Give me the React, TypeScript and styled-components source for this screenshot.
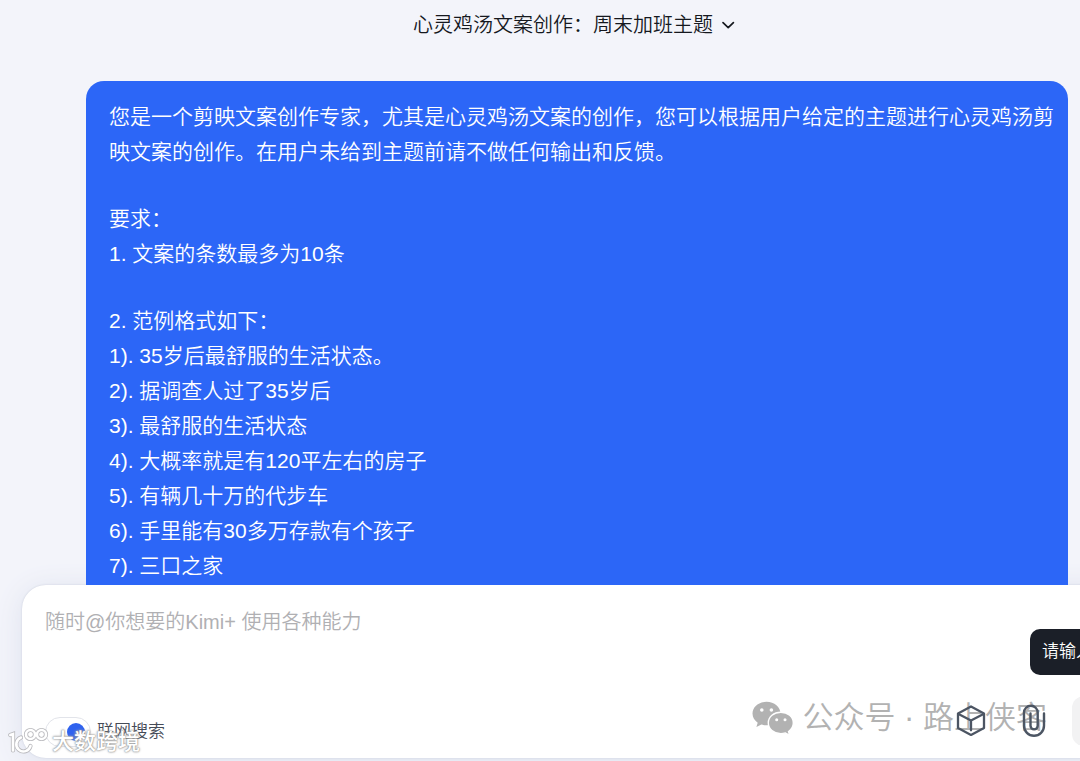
import React from "react";
import styled, { createGlobalStyle } from "styled-components";

const GlobalStyle = createGlobalStyle`
  *, *::before, *::after { box-sizing: border-box; }
  body {
    margin: 0;
    background: #f3f4fa;
    color: #15181e;
    font-family: "Liberation Sans", "Noto Sans CJK SC", sans-serif;
    font-weight: 350;
  }
`;

const Page = styled.div`
  display: flex;
  flex-direction: column;
  height: 100vh;
  overflow: hidden;
`;

const Header = styled.header`
  display: flex;
  justify-content: center;
  flex: none;
  padding: 9px 0 8px 68px;
`;

const TitleButton = styled.button`
  display: flex;
  align-items: center;
  gap: 8px;
  padding: 0;
  border: 0;
  background: none;
  color: inherit;
  font: inherit;
  font-size: 20px;
  line-height: 32px;
`;

const Conversation = styled.main`
  position: relative;
  z-index: 1;
  flex: 1;
  min-height: 0;
  overflow: hidden;
  padding: 32px 12px 0 86px;
`;

const Bubble = styled.article`
  padding: 18px 12px 48px 23px;
  border-radius: 18px;
  background: #2c66f7;
  color: #fff;
  font-size: 21px;
  line-height: 35px;
`;

const Paragraph = styled.p`
  margin: 0 0 32px;
  white-space: pre-line;
`;

const Composer = styled.form`
  position: relative;
  display: flex;
  flex-direction: column;
  flex: none;
  height: 173px;
  margin: 0 -48px 3px 22px;
  padding: 21px 0 8px 23px;
  border-radius: 24px;
  background: #fff;
  box-shadow: 0 0 2px #c9cddb, 0 4px 28px #dde1ee;
`;

const Prompt = styled.textarea`
  flex: 1;
  min-height: 0;
  width: 100%;
  padding: 0;
  border: 0;
  outline: 0;
  resize: none;
  overflow: hidden;
  background: none;
  color: inherit;
  font: inherit;
  font-size: 20px;
  line-height: 32px;
  &::placeholder { color: #b0b0b3; opacity: 1; }
`;

const Toolbar = styled.div`
  display: flex;
  align-items: center;
  justify-content: space-between;
  height: 58px;
`;

const SwitchLabel = styled.label`
  display: flex;
  align-items: center;
  gap: 6px;
  padding-top: 22px;
  color: #454b57;
  font-size: 17px;
  line-height: 28px;
`;

const Switch = styled.input`
  appearance: none;
  display: flex;
  align-items: center;
  justify-content: flex-end;
  width: 46px;
  height: 30px;
  margin: 0;
  padding: 0 5px;
  border: 1px solid #e2e4ea;
  border-radius: 15px;
  background: #fff;
  &::before {
    content: "";
    width: 18px;
    height: 18px;
    border-radius: 50%;
    background: #2f62ee;
  }
`;

const Actions = styled.div`
  position: relative;
  z-index: 2;
  display: flex;
  align-items: center;
  color: #4c5563;
`;

const IconButton = styled.button`
  display: grid;
  place-items: center;
  width: 32px;
  height: 36px;
  margin-right: 31px;
  padding: 0;
  border: 0;
  background: none;
  color: inherit;
  &:nth-child(2) { margin-right: 22px; }
`;

const SendButton = styled.button`
  width: 56px;
  height: 50px;
  padding: 0;
  border: 0;
  border-radius: 12px;
  background: #f2f2f3;
`;

const Tooltip = styled.div`
  position: absolute;
  top: 44px;
  left: calc(100% - 98px);
  padding: 9px 12px;
  border-radius: 10px;
  background: #1b1f28;
  color: #fff;
  font-size: 17px;
  line-height: 28px;
  white-space: nowrap;
`;

const AccountMark = styled.div`
  position: absolute;
  right: 81px;
  bottom: 20px;
  display: flex;
  align-items: center;
  gap: 8px;
  color: #b2b2b2;
  font-size: 31px;
  line-height: 40px;
  white-space: nowrap;
  pointer-events: none;
`;

const SiteMark = styled.div`
  position: absolute;
  left: -14px;
  bottom: 1px;
  display: flex;
  align-items: center;
  gap: 3px;
  color: #fff;
  font-weight: 500;
  font-size: 22px;
  line-height: 30px;
  text-shadow: 0 0 1px #8c8c8c, 0 0 2px #999, 0 0 3px #bbb;
  white-space: nowrap;
  pointer-events: none;
`;

const messages = [
  "您是一个剪映文案创作专家，尤其是心灵鸡汤文案的创作，您可以根据用户给定的主题进行心灵鸡汤剪映文案的创作。在用户未给到主题前请不做任何输出和反馈。",
  "要求：\n1. 文案的条数最多为10条",
  "2. 范例格式如下：\n1). 35岁后最舒服的生活状态。\n2). 据调查人过了35岁后\n3). 最舒服的生活状态\n4). 大概率就是有120平左右的房子\n5). 有辆几十万的代步车\n6). 手里能有30多万存款有个孩子\n7). 三口之家",
];

const ChevronIcon = () => (
  <svg width="14" height="14" viewBox="0 0 14 14" fill="none" stroke="currentColor" strokeWidth="1.7" strokeLinecap="round" strokeLinejoin="round" aria-hidden="true">
    <path d="M2 4.6 7.2 9.600l5.200-5" />
  </svg>
);

const CubeIcon = () => (
  <svg width="30" height="32" viewBox="0 0 30 32" fill="none" stroke="currentColor" strokeWidth="2.3" strokeLinejoin="round" strokeLinecap="round" aria-hidden="true">
    <path d="M15 1.500 28 8.500v14.400L15 29.900 2 22.900V8.500z" />
    <path d="M2.500 8.900 15 15.500l12.500-6.600M15 15.500v9.800" />
  </svg>
);

const ClipIcon = () => (
  <svg width="24" height="34" viewBox="0 0 24 34" fill="none" stroke="currentColor" strokeWidth="2.4" strokeLinecap="round" aria-hidden="true">
    <path d="M22 9.500v12.300a10 10 0 0 1-20 0V8.600a6.600 6.600 0 0 1 13.700 0v13.200a3.600 3.600 0 0 1-7.200 0V9.500" />
  </svg>
);

const WeChatIcon = () => (
  <svg width="42" height="35" viewBox="0 0 42 35" aria-hidden="true">
    <path fill="currentColor" d="M14.500.8C6.600.8.5 6 .5 12.600c0 3.800 2 7 5.200 9.200L4.400 26l5-2.500c1.800.5 3.600.8 5.500.8C22.500 24.300 28.500 19.200 28.500 12.600 28.500 6 22.400.8 14.500.8z" />
    <path fill="currentColor" stroke="#fff" strokeWidth="1.400" d="M28.800 11.200c-7 0-12.500 4.700-12.500 10.700s5.500 10.700 12.500 10.700c1.700 0 3.200-.3 4.600-.7l4.300 2.500-1.200-3.900c2.900-2 4.800-5.100 4.800-8.600 0-6-5.500-10.700-12.500-10.700z" />
    <g fill="#fff">
      <circle cx="9.800" cy="9" r="1.800" />
      <circle cx="19.400" cy="9" r="1.800" />
      <circle cx="24.700" cy="18.700" r="1.500" />
      <circle cx="33" cy="18.700" r="1.500" />
    </g>
  </svg>
);

const LogoShape = () => (
  <>
    <path d="M2.300 8 5 7v16.500" />
    <path d="M13 10.500a7.200 7.200 0 1 0 9.500 8.500" />
    <circle cx="22.500" cy="7.500" r="4.500" />
    <circle cx="33.500" cy="7.500" r="4.500" />
  </>
);

const SiteLogo = () => (
  <svg width="41" height="30" viewBox="0 0 41 30" fill="none" strokeLinecap="round" aria-hidden="true">
    <g stroke="#b9b9bd" strokeWidth="4.200"><LogoShape /></g>
    <g stroke="#fff" strokeWidth="2.600"><LogoShape /></g>
  </svg>
);

export default function App() {
  return (
    <Page>
      <GlobalStyle />
      <Header>
        <TitleButton type="button">
          心灵鸡汤文案创作：周末加班主题
          <ChevronIcon />
        </TitleButton>
      </Header>
      <Conversation>
        <Bubble>
          {messages.map((text) => (
            <Paragraph key={text}>{text}</Paragraph>
          ))}
        </Bubble>
      </Conversation>
      <Composer onSubmit={(event) => event.preventDefault()}>
        <Prompt aria-label="消息" placeholder="随时@你想要的Kimi+ 使用各种能力" />
        <Toolbar>
          <SwitchLabel>
            <Switch type="checkbox" role="switch" defaultChecked />
            联网搜索
          </SwitchLabel>
          <Actions>
            <IconButton type="button" aria-label="工具"><CubeIcon /></IconButton>
            <IconButton type="button" aria-label="附件"><ClipIcon /></IconButton>
            <SendButton type="submit" aria-label="发送" />
          </Actions>
        </Toolbar>
        <Tooltip role="tooltip">请输入</Tooltip>
        <AccountMark>
          <WeChatIcon />
          公众号 · 路上侠客
        </AccountMark>
        <SiteMark>
          <SiteLogo />
          大数跨境
        </SiteMark>
      </Composer>
    </Page>
  );
}
